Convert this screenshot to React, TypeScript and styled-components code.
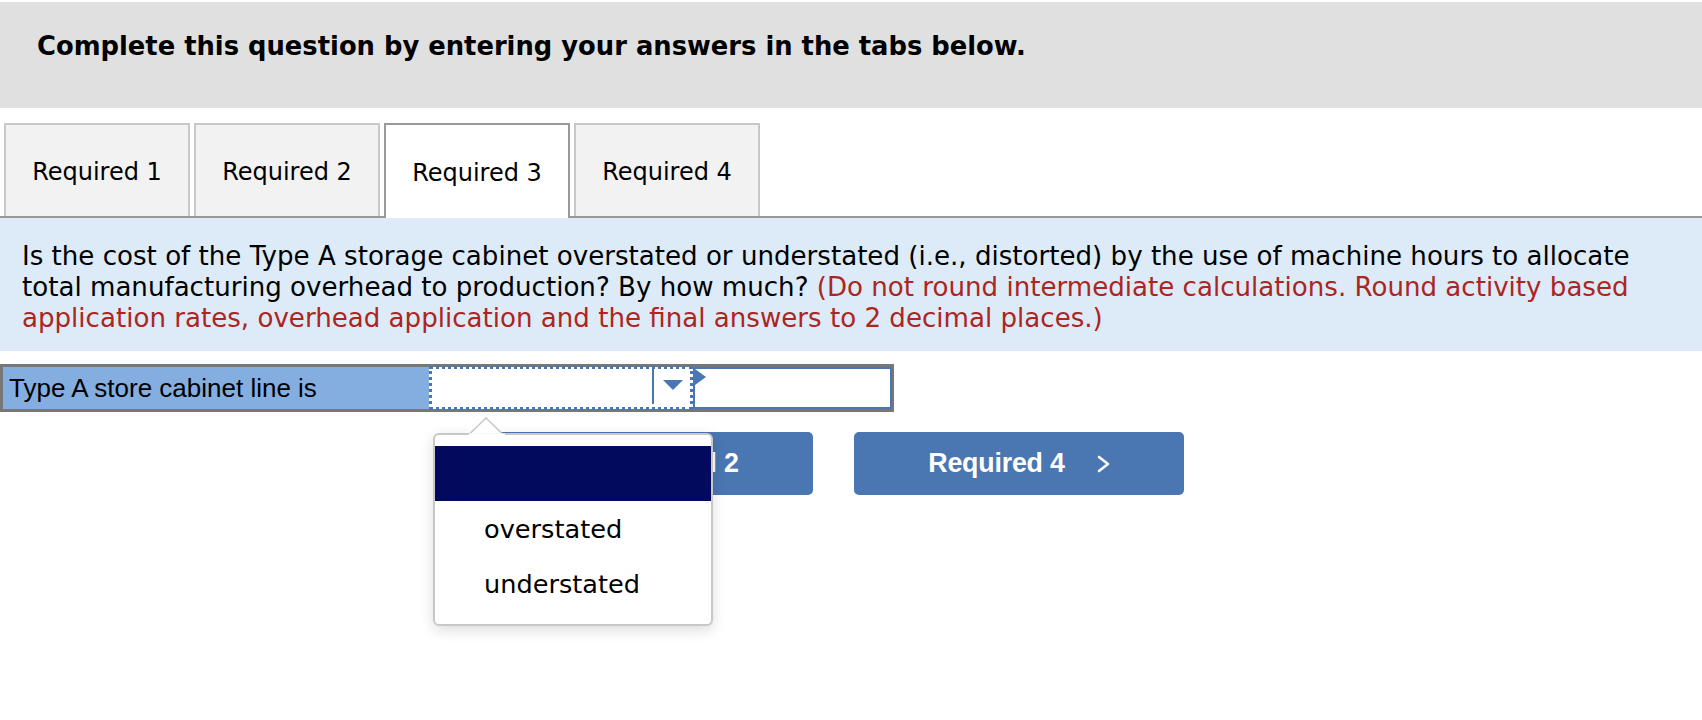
import React from 'react';
import styled, { createGlobalStyle } from 'styled-components';

const GlobalStyle = createGlobalStyle`
  html, body {
    margin: 0;
    padding: 0;
    background: #fff;
  }
  body {
    font-family: 'DejaVu Sans', Verdana, sans-serif;
    color: #000;
  }
`;

const Page = styled.div`
  width: 1702px;
  min-height: 720px;
  box-sizing: border-box;
  padding-top: 2px;
`;

const Banner = styled.div`
  height: 106px;
  box-sizing: border-box;
  background: #e0e0e0;
  padding: 29px 0 0 37px;
  font-size: 25.8px;
  font-weight: bold;
  line-height: 30px;
`;

const TabBar = styled.div`
  display: flex;
  align-items: flex-start;
  gap: 4px;
  height: 93px;
  margin-top: 15px;
  padding-left: 4px;
  border-bottom: 2px solid #999;
`;

const Tab = styled.div<{ $active?: boolean }>`
  width: 186px;
  height: ${(p) => (p.$active ? '95px' : '93px')};
  box-sizing: border-box;
  padding-top: 3px;
  border: 2px solid ${(p) => (p.$active ? '#999' : '#c8c8c8')};
  border-bottom: none;
  background: ${(p) => (p.$active ? '#fff' : '#f2f2f2')};
  display: flex;
  align-items: center;
  justify-content: center;
  font-size: 24px;
  cursor: pointer;
`;

const Prompt = styled.div`
  background: #ddebf8;
  padding: 23px 30px 17px 22px;
  font-size: 26.1px;
  line-height: 31px;
`;

const Note = styled.span`
  color: #ac251e;
`;

const AnswerRow = styled.div`
  display: flex;
  width: 894px;
  height: 48px;
  box-sizing: border-box;
  margin-top: 13px;
  border: 3px solid #777;
  border-right-width: 2px;
`;

const LabelCell = styled.div`
  width: 426px;
  box-sizing: border-box;
  padding-left: 6px;
  background: #84ade0;
  display: flex;
  align-items: center;
  font-family: 'Liberation Sans', Arial, sans-serif;
  font-size: 26px;
`;

const SelectCell = styled.div`
  position: relative;
  width: 264px;
  background: #fff;
  display: flex;

  &::after {
    content: '';
    position: absolute;
    top: -1px;
    bottom: -1px;
    left: 0;
    right: 0;
    border: 3px dotted #4a77b4;
    pointer-events: none;
  }
`;

const SelectValue = styled.div`
  flex: 1;
`;

const SelectArrow = styled.div`
  width: 41px;
  margin-bottom: 5px;
  border-left: 2px solid #4a77b4;
  display: flex;
  justify-content: center;
  padding-top: 13px;
  padding-right: 2px;
  box-sizing: border-box;
`;

const InputCell = styled.div`
  position: relative;
  flex: 1;
  border: 2px solid #4a77b4;
  background: #fff;
`;

const Marker = styled.svg`
  position: absolute;
  left: 0;
  top: 0;
`;

const Popup = styled.div`
  position: absolute;
  z-index: 10;
  left: 4px;
  top: 66px;
  width: 280px;
  height: 193px;
  box-sizing: border-box;
  padding: 11px 0 13px;
  background: #fff;
  border: 2px solid #c8c8c8;
  border-radius: 6px;
  box-shadow: 0 4px 14px rgba(0, 0, 0, 0.14);
`;

const PopupTip = styled.svg`
  position: absolute;
  left: 34px;
  top: -18px;
`;

const Option = styled.div<{ $selected?: boolean }>`
  height: 55px;
  padding-left: 49px;
  display: flex;
  align-items: center;
  font-size: 25.6px;
  background: ${(p) => (p.$selected ? '#020a5e' : 'transparent')};
  color: ${(p) => (p.$selected ? '#fff' : '#000')};
`;

const NavRow = styled.div`
  display: flex;
  gap: 41px;
  margin-top: 20px;
  padding-left: 483px;
`;

const NavButton = styled.button`
  width: 330px;
  height: 63px;
  padding: 0;
  border: none;
  border-radius: 5px;
  background: #4a76b2;
  color: #fff;
  display: flex;
  align-items: center;
  justify-content: center;
  gap: 32px;
  font-family: 'Liberation Sans', Arial, sans-serif;
  font-size: 26.8px;
  font-weight: bold;
  letter-spacing: -0.2px;
  cursor: pointer;
`;

function Chevron({ dir }: { dir: 'left' | 'right' }) {
  const pts = dir === 'right' ? '2,2 11,9 2,16' : '11,2 2,9 11,16';
  return (
    <svg width="13" height="18" viewBox="0 0 13 18">
      <polyline points={pts} fill="none" stroke="#fff" strokeWidth="2.6" strokeLinecap="round" strokeLinejoin="round" />
    </svg>
  );
}

const tabs = ['Required 1', 'Required 2', 'Required 3', 'Required 4'];

export default function App() {
  return (
    <Page>
      <GlobalStyle />
      <Banner>Complete this question by entering your answers in the tabs below.</Banner>

      <TabBar>
        {tabs.map((t, i) => (
          <Tab key={t} $active={i === 2}>
            {t}
          </Tab>
        ))}
      </TabBar>

      <Prompt>
        Is the cost of the Type A storage cabinet overstated or understated (i.e., distorted) by the use of machine hours to
        allocate total manufacturing overhead to production? By how much?{' '}
        <Note>
          (Do not round intermediate calculations. Round activity based application rates, overhead application and the final
          answers to 2 decimal places.)
        </Note>
      </Prompt>

      <AnswerRow>
        <LabelCell>Type A store cabinet line is</LabelCell>
        <SelectCell>
          <SelectValue />
          <SelectArrow>
            <svg width="20" height="10" viewBox="0 0 20 10">
              <polygon points="0,0 20,0 10,10" fill="#4a77b4" />
            </svg>
          </SelectArrow>
          <Popup>
            <PopupTip width="36" height="18" viewBox="0 0 36 18">
              <polygon points="0,17.5 17,1 34,17.5" fill="#fff" stroke="#c8c8c8" strokeWidth="1.5" />
              <rect x="0" y="16.5" width="36" height="2" fill="#fff" />
            </PopupTip>
            <Option $selected />
            <Option>overstated</Option>
            <Option>understated</Option>
          </Popup>
        </SelectCell>
        <InputCell>
          <Marker width="12" height="16" viewBox="0 0 12 16">
            <polygon points="0,0 11,8 0,16" fill="#4a77b4" />
          </Marker>
        </InputCell>
      </AnswerRow>

      <NavRow>
        <NavButton>
          <Chevron dir="left" />
          Required 2
        </NavButton>
        <NavButton>
          Required 4
          <Chevron dir="right" />
        </NavButton>
      </NavRow>
    </Page>
  );
}
